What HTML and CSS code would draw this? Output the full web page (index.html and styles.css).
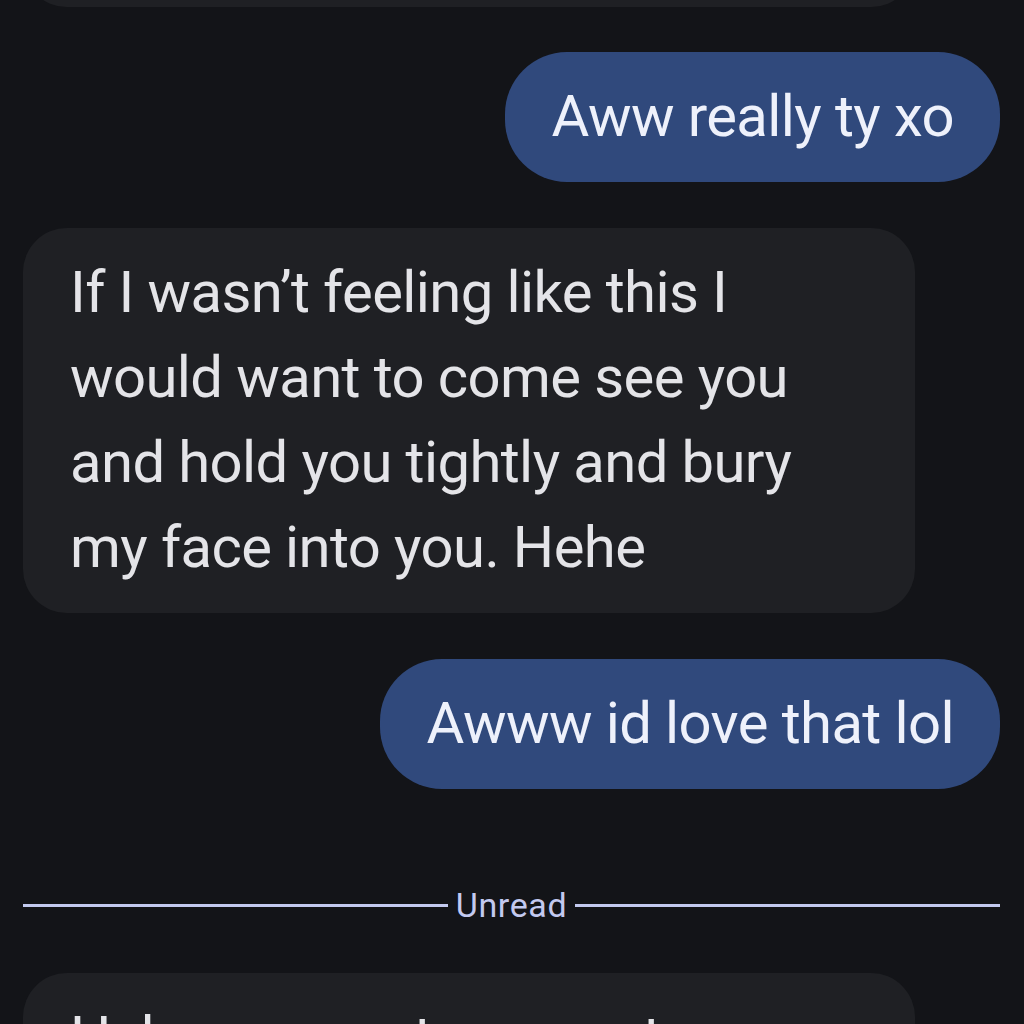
FILE: index.html
```html
<!DOCTYPE html>
<html lang="en">
<head>
<meta charset="utf-8">
<title>Messages</title>
<link rel="stylesheet" href="styles.css">
</head>
<body>
<main class="thread">
  <div class="row row-in row-cut">
    <div class="bubble bubble-in bubble-cut"></div>
  </div>
  <div class="row row-out">
    <div class="bubble bubble-out">Aww really ty xo</div>
  </div>
  <div class="row row-in">
    <div class="bubble bubble-in">If I wasn’t feeling like this I would want to come see you and hold you tightly and bury my face into you. Hehe</div>
  </div>
  <div class="row row-out">
    <div class="bubble bubble-out">Awww id love that lol</div>
  </div>
  <div class="divider">
    <span class="divider-line"></span>
    <span class="divider-label">Unread</span>
    <span class="divider-line"></span>
  </div>
  <div class="row row-in">
    <div class="bubble bubble-in">Hehe you are too sweet, anytime you want</div>
  </div>
</main>
</body>
</html>
```

FILE: styles.css
```css
html, body {
  margin: 0;
  padding: 0;
  background: #131418;
  height: 100%;
  overflow: hidden;
}

.thread {
  display: flex;
  flex-direction: column;
  gap: 46px;
  padding: 0 24px 0 23px;
  font-family: Roboto, "Noto Sans", sans-serif;
}

.row {
  display: flex;
}

.row-out {
  justify-content: flex-end;
}

.row-in {
  justify-content: flex-start;
}

.row-cut {
  margin-top: -113px;
  margin-bottom: -1px;
}

.bubble {
  font-size: 58px;
  letter-spacing: -0.6px;
  line-height: 85px;
  padding: 22px 46px 23px 47px;
  box-sizing: border-box;
}

.bubble-in {
  background: #1f2024;
  color: #e4e4e8;
  border-radius: 44px;
  max-width: 892px;
}

.bubble-cut {
  width: 892px;
  height: 120px;
}

.bubble-out {
  background: #30497c;
  color: #eef1fb;
  border-radius: 62px;
  white-space: nowrap;
}

.divider {
  display: flex;
  align-items: center;
  gap: 8px;
  margin: 51px 0 3px;
  height: 38px;
}

.divider-line {
  flex: 1;
  height: 3px;
  background: #c3c9ef;
}

.divider-label {
  font-size: 34px;
  letter-spacing: 0.6px;
  line-height: 38px;
  color: #c3c9ef;
}
```
